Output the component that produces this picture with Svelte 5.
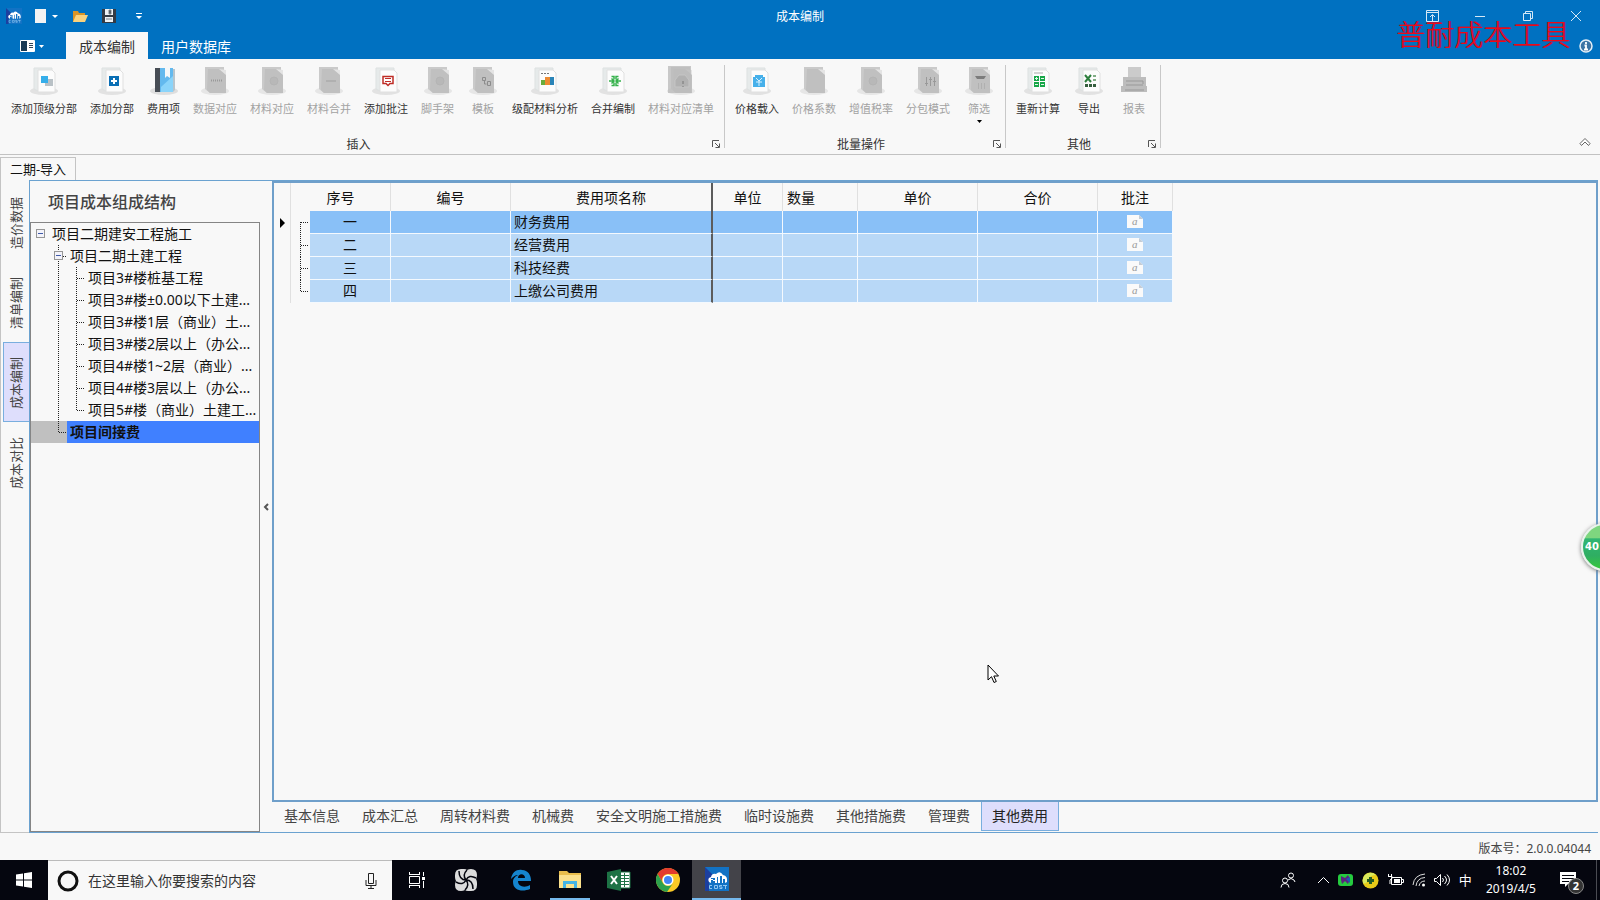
<script>
    let activeRibbonTab = $state('成本编制');
    let activeSideTab = $state('成本编制');
    let activeSheet = $state('其他费用');
    let selectedNode = $state(9);
    let selectedRow = $state(0);

    const ribbonTabs = ['成本编制', '用户数据库'];

    const groups = [
        {
            title: '插入',
            items: [
                { label: '添加顶级分部', icon: 'top' },
                { label: '添加分部', icon: 'add' },
                { label: '费用项', icon: 'book' },
                { label: '数据对应', icon: 'data', disabled: true },
                { label: '材料对应', icon: 'match', disabled: true },
                { label: '材料合并', icon: 'merge', disabled: true },
                { label: '添加批注', icon: 'comment' },
                { label: '脚手架', icon: 'match', disabled: true },
                { label: '模板', icon: 'template', disabled: true },
                { label: '级配材料分析', icon: 'chart' },
                { label: '合并编制', icon: 'combine' },
                { label: '材料对应清单', icon: 'list', disabled: true }
            ]
        },
        {
            title: '批量操作',
            items: [
                { label: '价格载入', icon: 'price' },
                { label: '价格系数', icon: 'plain', disabled: true },
                { label: '增值税率', icon: 'match', disabled: true },
                { label: '分包模式', icon: 'sliders', disabled: true },
                { label: '筛选', icon: 'filter', disabled: true, menu: true }
            ]
        },
        {
            title: '其他',
            items: [
                { label: '重新计算', icon: 'calc' },
                { label: '导出', icon: 'export' },
                { label: '报表', icon: 'print', disabled: true }
            ]
        }
    ];

    const sideTabs = ['造价数据', '清单编制', '成本编制', '成本对比'];

    // guides: one entry per 18px indent cell in front of the text
    const tree = [
        { text: '项目二期建安工程施工', guides: ['root'] },
        { text: '项目二期土建工程', guides: ['blank', 'box'] },
        { text: '项目3#楼桩基工程', guides: ['blank', 'line', 'tee'] },
        { text: '项目3#楼±0.00以下土建...', guides: ['blank', 'line', 'tee'] },
        { text: '项目3#楼1层（商业）土...', guides: ['blank', 'line', 'tee'] },
        { text: '项目3#楼2层以上（办公...', guides: ['blank', 'line', 'tee'] },
        { text: '项目4#楼1~2层（商业）...', guides: ['blank', 'line', 'tee'] },
        { text: '项目4#楼3层以上（办公...', guides: ['blank', 'line', 'tee'] },
        { text: '项目5#楼（商业）土建工...', guides: ['blank', 'line', 'end'] },
        { text: '项目间接费', guides: ['blank', 'end'] }
    ];

    const rows = [
        { no: '一', name: '财务费用' },
        { no: '二', name: '经营费用' },
        { no: '三', name: '科技经费' },
        { no: '四', name: '上缴公司费用' }
    ];

    const sheets = ['基本信息', '成本汇总', '周转材料费', '机械费', '安全文明施工措施费', '临时设施费', '其他措施费', '管理费', '其他费用'];
</script>

{#snippet page(grey)}
    <ellipse cx="16" cy="26" rx="14" ry="4" fill={grey ? '#e6e6e6' : '#e2e2e2'} />
    {#if grey}
        <path d="M6 2H25V6L27 8V28H11L6 24Z" fill="#cacaca" />
        <path d="M9 4H22L27 9V28H11L8 25Z" fill="#c0c0c0" />
        <path d="M20 4L27 10V5Z" fill="#e4e4e4" />
    {:else}
        <path d="M6 3H24V26H10L6 24Z" fill="#e6eaea" stroke="#dde1e1" />
        <path d="M10 5H24L27 8V27H10Z" fill="#fcfcfc" stroke="#e0e0e0" />
    {/if}
{/snippet}

{#snippet cloud()}
    <path d="M0 0H24V24H0Z" fill="#1272c4" />
    <path d="M0 0L8 8L4 16V24H0Z" fill="#1c3f9f" />
    <path d="M4 15Q2 11 6 10Q7 6 11 7Q15 3 18 8Q23 9 22 15L20 16V12H18V16H17V9H15V16H13V10H12V16H10V14H8V13H10V11H6V12H8V13H6V16Z" fill="#fff" />
    <path d="M7 18.500H4.500V21.500H7M9.500 18.500h3v3h-3zM17 18.500h-2.500v1.500h2.500v1.500h-2.500M18 18.500h4M20.500 18v4" fill="none" stroke="#8fc5f0" />
{/snippet}

{#snippet ribbonIcon(icon, disabled)}
    <svg width="32" height="32" viewBox="0 0 32 32" aria-hidden="true">
        {#if icon === 'book'}
            <ellipse cx="16" cy="26" rx="14" ry="4" fill="#dedede" />
            <path d="M7 3H25V27H7Z" fill="#63b9ee" />
            <path d="M7 3H12V27H7Z" fill="#474d55" />
            <path d="M13 22L25 11V27H13Z" fill="#8ad4fa" />
            <path d="M17 3H22V13L19 11L17 13Z" fill="#f4f8fa" />
            <path d="M25 4H27V25L25 27Z" fill="#b7c5cd" />
        {:else if icon === 'print'}
            <path d="M10 2H23V13H10Z" fill="#cbcbcb" />
            <path d="M5 12H28V21H29V27H3V21H5Z" fill="#bdbdbd" />
            <path d="M8 16H25V19M8 20H25M7 25H26" fill="none" stroke="#999" />
        {:else}
            {@render page(disabled)}
            {#if icon === 'top'}
                <path d="M17 14h8v7h-8z" fill="#b9c1c6" />
                <path d="M13 11h7v7h-7z" fill="#36aeea" />
            {:else if icon === 'add'}
                <path d="M13 11h10v10h-10z" fill="#0a6fb5" />
                <path d="M18 13v6M15 16h6" stroke="#fff" stroke-width="2" />
            {:else if icon === 'comment'}
                <path d="M13 11.500h10v7h-3l-2 2l-2-2h-3z" fill="#fff" stroke="#bf2c26" stroke-width="1.500" />
                <path d="M15 13.500h6M15 16.500h6" stroke="#bf2c26" />
            {:else if icon === 'chart'}
                <path d="M12 8.500h9" stroke="#777" stroke-dasharray="2 1" />
                <path d="M12 15h4v5h-4z" fill="#69ad3b" />
                <path d="M16 12h5v8h-5z" fill="#ed8b32" />
                <path d="M21 12h4v8h-4z" fill="#2a84b8" />
            {:else if icon === 'combine'}
                <path d="M14.500 11.500h2.500v3M14.500 20.500h2.500v-3M21.500 11.500h-2.500v3M21.500 20.500h-2.500v-3M12 16h5M24 16h-5M14.500 13.500l2.500 2.500l-2.500 2.500M21.500 13.500l-2.500 2.500l2.500 2.500" fill="none" stroke="#34b14b" stroke-width="1.500" />
            {:else if icon === 'price'}
                <path d="M14 10h8v2h2v10h-12v-10h2z" fill="#47b0ea" />
                <path d="M15 13l3 3l3-3M18 16v5M15 17h6" fill="none" stroke="#d9f1ff" />
            {:else if icon === 'calc'}
                <path d="M12 8h9" stroke="#aaa" />
                <path d="M12 11h5v5h-5zM18 11h5v5h-5zM12 17h5v5h-5zM18 17h5v5h-5z" fill="#17a648" />
                <path d="M13 13.500h3M19 13.500h3M13 19.500h3M19 19.500h3M14.500 12v3" stroke="#e3f7e9" />
            {:else if icon === 'export'}
                <path d="M12 10l6 7M18 10l-6 7" stroke="#2d7e3d" stroke-width="2" />
                <path d="M20 10h3v2h-3zM20 14h3v2h-3z" fill="#80ac84" />
                <path d="M12 19h3v3h-3zM16 19h3v3h-3zM20 19h3v3h-3z" fill="#355e3e" />
            {:else if icon === 'data'}
                <path d="M12 15.500h12" stroke="#999" stroke-width="2" stroke-dasharray="1 1" />
            {:else if icon === 'match'}
                <circle cx="18" cy="16" r="4" fill="#b8b8b8" stroke="#b4b4b4" />
            {:else if icon === 'merge'}
                <path d="M13 16h10" stroke="#b0b0b0" stroke-width="2" />
            {:else if icon === 'template'}
                <path d="M15.500 12.500h3v3h-3zM17.500 16v3h2M20.500 16.500h3v4h-3z" fill="none" stroke="#8c8c8c" />
            {:else if icon === 'list'}
                <path d="M3 1h23v27h-23z" fill="#bbb" opacity=".8" />
                <path d="M10 22v-7l4-5h6l4 5v7z" fill="#b1b1b1" stroke="#c4c4c4" />
                <path d="M18 16v3M18 21v1" stroke="#777" />
            {:else if icon === 'sliders'}
                <path d="M14.500 12v9M18.500 12v9M22.500 12v9M13 18.500h3M17 14.500h3M21 16.500h3" stroke="#999" />
            {:else if icon === 'filter'}
                <path d="M12 11h11l-2 3h-7z" fill="#7c7c7c" />
                <path d="M15.500 18v6M18.500 18v6M21.500 18v6" stroke="#b0b0b0" />
            {/if}
        {/if}
    </svg>
{/snippet}

{#snippet guide(kind)}
    <svg class="guide" width="18" height="22" viewBox="0 0 18 22" aria-hidden="true">
        <g stroke="#222" stroke-dasharray="1 1">
            {#if kind === 'line' || kind === 'tee' || kind === 'box'}
                <path d="M9.5 0V22" />
            {/if}
            {#if kind === 'end'}
                <path d="M9.5 0V11" />
            {/if}
            {#if kind === 'tee' || kind === 'end' || kind === 'box'}
                <path d="M10 11.5H18" />
            {/if}
        </g>
        {#if kind === 'root' || kind === 'box'}
            <rect x="5.5" y="6.5" width="8" height="8" fill="#f3f3fa" stroke="#969696" />
            <path d="M7 10.5H12" stroke="#3f5aa8" />
        {/if}
    </svg>
{/snippet}

<div class="window">
    <header>
        <div class="titlebar">
            <div class="quick">
                <svg class="logo" width="16" height="16" viewBox="0 0 24 24" aria-hidden="true">{@render cloud()}</svg>
                <button aria-label="新建">
                    <svg width="24" height="16" viewBox="0 0 24 16"><path d="M0 1h11v14h-11z" fill="#f3f3f3" /><path d="M17 7h6l-3 3z" fill="#fff" /></svg>
                </button>
                <button aria-label="打开">
                    <svg width="16" height="16" viewBox="0 0 16 16"><path d="M1 3h5l1 2h6v9h-12z" fill="#d99427" /><path d="M4 7h12l-3 7h-12z" fill="#f9d27e" /></svg>
                </button>
                <button aria-label="保存">
                    <svg width="16" height="16" viewBox="0 0 16 16"><path d="M1 1h14v14h-14z" fill="#333b45" /><path d="M4 1h8v6h-8zM4 9h8v5h-8z" fill="#eef2f5" /><path d="M8 2h2v4h-2zM5 11h6" fill="#333b45" stroke="#7d858c" stroke-width="1" /></svg>
                </button>
                <button aria-label="自定义快速访问工具栏">
                    <svg width="8" height="16" viewBox="0 0 8 16"><path d="M1 5.5h6" stroke="#fff" /><path d="M1 8h6l-3 3z" fill="#fff" /></svg>
                </button>
            </div>
            <h1>成本编制</h1>
            <div class="controls">
                <button aria-label="功能区显示选项">
                    <svg width="13" height="12" viewBox="0 0 13 12"><path d="M.5.5h12v11h-12zM.5 2.5h12M6.500 11V5M4 7l2.500-2.500l2.500 2.500" fill="none" stroke="#d5e8f6" /></svg>
                </button>
                <button aria-label="最小化">
                    <svg width="12" height="12" viewBox="0 0 12 12"><path d="M1 6.500h10" stroke="#d5e8f6" /></svg>
                </button>
                <button aria-label="还原">
                    <svg width="12" height="12" viewBox="0 0 12 12"><path d="M1.500 3.500h7v7h-7zM3.500 3.500v-2h7v7h-2" fill="none" stroke="#d5e8f6" /></svg>
                </button>
                <button aria-label="关闭">
                    <svg width="12" height="12" viewBox="0 0 12 12"><path d="M1 1l10 10M11 1l-10 10" stroke="#d5e8f6" /></svg>
                </button>
            </div>
            <div class="brand">普耐成本工具</div>
        </div>
        <nav class="ribbon-tabs">
            <button class="app-menu" aria-label="文件">
                <svg width="26" height="12" viewBox="0 0 26 12"><path d="M.5.5h14v11h-14z" fill="#183a55" stroke="#fff" /><path d="M7 1h7v10h-7z" fill="#fff" /><path d="M9 3.500h4M9 5.500h4M9 7.500h4" stroke="#345" /><path d="M19 5h5l-2.500 3z" fill="#fff" /></svg>
            </button>
            {#each ribbonTabs as tab}
                <button class="ribbon-tab" class:active={activeRibbonTab === tab} onclick={() => (activeRibbonTab = tab)}>{tab}</button>
            {/each}
            <button class="info" aria-label="关于">
                <svg width="14" height="14" viewBox="0 0 14 14"><circle cx="7" cy="7" r="6" fill="#3c73a4" stroke="#e6eff7" stroke-width="1.500" /><path d="M7 3v2M5.500 6.500h1.500v4M5 10.500h4" fill="none" stroke="#fff" stroke-width="1.800" /></svg>
            </button>
        </nav>
    </header>

    <section class="ribbon">
        {#each groups as group}
            <div class="group">
                <div class="tools">
                    {#each group.items as item}
                        <button class="tool" disabled={item.disabled}>
                            {@render ribbonIcon(item.icon, item.disabled)}
                            <span>{item.label}</span>
                            {#if item.menu}
                                <svg width="5" height="3" viewBox="0 0 5 3" aria-hidden="true"><path d="M0 0h5l-2.500 3z" fill="#000" /></svg>
                            {/if}
                        </button>
                    {/each}
                </div>
                <div class="caption">
                    <span>{group.title}</span>
                    <button aria-label="{group.title}选项">
                        <svg width="8" height="8" viewBox="0 0 8 8"><path d="M.5 7V.5H7M3 3l4 4M7.500 3.500v4h-4" fill="none" stroke="#555" /></svg>
                    </button>
                </div>
            </div>
        {/each}
        <button class="fold" aria-label="折叠功能区">
            <svg width="12" height="9" viewBox="0 0 12 9"><path d="M1 5.500l5-5l5 5l-1.500 2l-3.500-3.500l-3.500 3.500z" fill="#fff" stroke="#666" /></svg>
        </button>
    </section>

    <div class="doc-tabs">
        <button>二期-导入</button>
    </div>

    <main>
        <nav class="side-tabs">
            {#each sideTabs as tab}
                <button class:active={activeSideTab === tab} onclick={() => (activeSideTab = tab)}><span>{tab}</span></button>
            {/each}
        </nav>

        <div class="frame">
            <aside>
                <h2>项目成本组成结构</h2>
                <ul class="tree">
                    {#each tree as node, i}
                        <li>
                            <button class="node" class:selected={selectedNode === i} onclick={() => (selectedNode = i)}>
                                {#each node.guides as kind}{@render guide(kind)}{/each}
                                <span>{node.text}</span>
                            </button>
                        </li>
                    {/each}
                </ul>
            </aside>
            <button class="splitter" aria-label="收起">
                <svg width="6" height="8" viewBox="0 0 6 8"><path d="M5 1L2 4L5 7" fill="none" stroke="#555" stroke-width="2" /></svg>
            </button>

            <div class="content">
                <div class="sheet">
                    <table>
                        <colgroup>
                            <col class="w-mark" /><col class="w-guide" /><col class="w-no" /><col class="w-wide" /><col class="w-name" />
                            <col class="w-unit" /><col class="w-short" /><col class="w-wide" /><col class="w-wide" /><col class="w-short" />
                        </colgroup>
                        <thead>
                            <tr>
                                <th></th>
                                <th colspan="2">序号</th>
                                <th>编号</th>
                                <th class="fixed">费用项名称</th>
                                <th>单位</th>
                                <th class="left">数量</th>
                                <th>单价</th>
                                <th>合价</th>
                                <th>批注</th>
                            </tr>
                        </thead>
                        <tbody>
                            {#each rows as row, i}
                                <tr class:selected={selectedRow === i} onclick={() => (selectedRow = i)}>
                                    <td class="mark">
                                        {#if selectedRow === i}
                                            <svg width="5" height="10" viewBox="0 0 5 10"><path d="M0 0l5 5l-5 5z" fill="#000" /></svg>
                                        {/if}
                                    </td>
                                    <td class="lines">
                                        <svg width="19" height="23" viewBox="0 0 19 23">
                                            <g stroke="#222" stroke-dasharray="1 1">
                                                <path d="M9.500 {i === 0 ? 11 : 0}V{i === rows.length - 1 ? 11 : 23}" />
                                                <path d="M10 11.500H18" />
                                            </g>
                                        </svg>
                                    </td>
                                    <td class="center">{row.no}</td>
                                    <td></td>
                                    <td class="fixed">{row.name}</td>
                                    <td></td>
                                    <td></td>
                                    <td></td>
                                    <td></td>
                                    <td class="center">
                                        <button class="note" aria-label="批注">
                                            <svg width="16" height="13" viewBox="0 0 16 13"><path d="M0 0h12l4 4v9h-16z" fill="#fafafa" /><path d="M12 0v4h4z" fill="#c3ccd6" /><text x="5" y="10">a</text></svg>
                                        </button>
                                    </td>
                                </tr>
                            {/each}
                        </tbody>
                    </table>
                </div>
                <nav class="sheet-tabs">
                    {#each sheets as sheet}
                        <button class:active={activeSheet === sheet} onclick={() => (activeSheet = sheet)}>{sheet}</button>
                    {/each}
                </nav>
            </div>
        </div>
    </main>

    <footer class="status">版本号：2.0.0.04044</footer>

    <div class="taskbar">
        <button class="start" aria-label="开始">
            <svg width="16" height="16" viewBox="0 0 16 16"><path d="M0 2.500L7 1.500V7.500H0zM8 1.300L16 0V7.500H8zM0 8.500H7V14.500L0 13.500zM8 8.500H16V16L8 14.700z" fill="#fff" /></svg>
        </button>
        <label class="search">
            <svg width="22" height="22" viewBox="0 0 22 22" aria-hidden="true"><circle cx="11" cy="11" r="9" fill="none" stroke="#111" stroke-width="3" /></svg>
            <input type="text" placeholder="在这里输入你要搜索的内容" aria-label="搜索" />
            <svg width="12" height="18" viewBox="0 0 12 18" aria-hidden="true"><path d="M3.500 1.500h5v10h-5zM1 8v5.500h10V8M6 14v3M3 16.500h6" fill="none" stroke="#222" /></svg>
        </label>
        <button class="task" aria-label="任务视图">
            <svg width="18" height="16" viewBox="0 0 18 16"><path d="M1.500 0v3M11.500 0v3M1.500 13v3M11.500 13v3M1 2.500h11M1 13.500h11M1.500 4.500h10v7h-10zM15.500 0v4M15.500 9v7" fill="none" stroke="#fff" /><path d="M14 5h3v3h-3z" fill="#fff" /></svg>
        </button>
        <button class="task fan" aria-label="风扇">
            <svg width="22" height="22" viewBox="0 0 22 22">
                <path d="M6 0H9Q11 0 12 1Q14 0 16 0Q22 0 22 6Q22 8 21 10Q22 12 22 14V16Q22 22 16 22H13Q11 22 10 21Q8 22 6 22Q0 22 0 16Q0 14 1 12Q0 10 0 8V6Q0 0 6 0Z" fill="#dcdcdc" />
                <path d="M11 11Q7 6 12 1M11 11Q14 5 21 9M11 11Q18 11 18 20M11 11Q15 16 10 21M11 11Q8 17 1 13M11 11Q4 11 4 2" fill="none" stroke="#05060f" stroke-width="1.500" />
            </svg>
        </button>
        <button class="task" aria-label="Edge">
            <svg width="22" height="22" viewBox="0 0 22 22"><path d="M1 10C2 3 7 0 12 1C18 1 21 6 21 12H8C8 18 15 19 20 16V20C13 23 3 22 3 13C3 9 6 7 8 6C5 6 3 8 1 10ZM8 9H15C15 4 8 4 8 9Z" fill="#1585cf" /></svg>
        </button>
        <button class="task open" aria-label="文件资源管理器">
            <svg width="22" height="20" viewBox="0 0 22 20"><path d="M0 1h8l2 2h12v15h-22z" fill="#e9bd4c" /><path d="M0 5h22v13h-22z" fill="#fbe08c" /><path d="M4 18v-7h14v7h-3v-4h-8v4z" fill="#45b3e4" /></svg>
        </button>
        <button class="task" aria-label="Excel">
            <svg width="24" height="22" viewBox="0 0 24 22"><path d="M12 3h11v16h-11z" fill="#fff" stroke="#1d7245" /><path d="M13 6.500h9M13 9.500h9M13 12.500h9M13 15.500h9M17.500 4v14" stroke="#1d7245" /><path d="M0 3L14 0V22L0 19z" fill="#1d7245" /><path d="M4 7l6 8M10 7l-6 8" stroke="#fff" stroke-width="2" /></svg>
        </button>
        <button class="task" aria-label="Chrome">
            <svg width="24" height="24" viewBox="0 0 24 24"><circle cx="12" cy="12" r="12" fill="#fbc926" /><path d="M1.600 6A12 12 0 0 1 22.400 6H12A6 6 0 0 0 6.800 15Z" fill="#e33b2e" /><path d="M1.600 6A12 12 0 0 0 11 24L17.200 15A6 6 0 0 1 6.800 15Z" fill="#2da14d" /><circle cx="12" cy="12" r="5.500" fill="#fff" /><circle cx="12" cy="12" r="4" fill="#4285f4" /></svg>
        </button>
        <button class="task current" aria-label="成本编制">
            <svg width="24" height="24" viewBox="0 0 24 24">{@render cloud()}</svg>
        </button>

        <div class="tray">
            <button class="people" aria-label="人脉">
                <svg width="16" height="16" viewBox="0 0 16 16"><circle cx="11" cy="3.500" r="2.500" fill="none" stroke="#fff" /><circle cx="5" cy="8.500" r="2.500" fill="none" stroke="#fff" /><path d="M1 15.500q0-4 4-4t4 4M8 8q3-3 6 0l1 2" fill="none" stroke="#fff" /></svg>
            </button>
            <button aria-label="显示隐藏的图标">
                <svg width="13" height="8" viewBox="0 0 13 8"><path d="M1 7l5.500-5.500l5.500 5.500" fill="none" stroke="#fff" /></svg>
            </button>
            <button aria-label="电池助手">
                <svg width="16" height="14" viewBox="0 0 16 14"><rect x="0" y="1" width="15" height="12" rx="3" fill="#25cb3f" /><path d="M3 3l4 2l3-3l2 4l-2 5l-3-3l-3 3l-1-4z" fill="#5b2480" /><path d="M8 6l4-2v6z" fill="#1d59b5" /></svg>
            </button>
            <button aria-label="安全卫士">
                <svg width="17" height="17" viewBox="0 0 17 17"><circle cx="8.500" cy="8.500" r="8" fill="#e8cb18" /><path d="M2 4a8 8 0 0 1 12-1q-6 0-8 5t-5 3q-1-3 1-7" fill="#d9ea5c" /><path d="M8.500 5v7M5 8.500h7" stroke="#245c20" stroke-width="3" /></svg>
            </button>
            <button aria-label="电源">
                <svg width="17" height="12" viewBox="0 0 17 12"><path d="M4.500 3.500h10v7h-10zM15 5.500h1.500v3H15M1.500 0v2M4.500 0v2M1 2.500h4v2l-2 1.500v4" fill="none" stroke="#fff" /><path d="M7 5h6v4h-6z" fill="#fff" /></svg>
            </button>
            <button aria-label="网络">
                <svg width="14" height="14" viewBox="0 0 14 14"><path d="M1 12Q2 2 13 1M4 13Q5 5 13 4.500M7 13Q8 8 13 8" fill="none" stroke="#ddd" /><circle cx="11.500" cy="12" r="1.500" fill="#fff" /></svg>
            </button>
            <button aria-label="音量">
                <svg width="17" height="14" viewBox="0 0 17 14"><path d="M.5 5.500h2l4-4v11l-4-4h-2zM8.500 5q2 2 0 4M10.500 3q4 4 0 8M13 1.500q5 5.500 0 11" fill="none" stroke="#fff" /></svg>
            </button>
            <button class="ime">中</button>
            <button class="clock"><span>18:02</span><span>2019/4/5</span></button>
            <button class="notice" aria-label="通知">
                <svg width="16" height="16" viewBox="0 0 16 16"><path d="M0 0h16v12h-8l-3 3v-3h-5z" fill="#fff" /><path d="M2 3.500h12M2 6.500h12M2 9.500h7" stroke="#05060f" /></svg>
                <span>2</span>
            </button>
        </div>
    </div>

    <div class="ball">40</div>
    <svg class="pointer" width="13" height="20" viewBox="0 0 13 20" aria-hidden="true"><path d="M1 1V16L4.500 12.700L7 18.500L9.300 17.500L6.800 12H11.500Z" fill="#fff" stroke="#000" /></svg>
</div>

<style>
    :global(body) {
        margin: 0;
        overflow: hidden;
    }

    .window {
        position: relative;
        display: flex;
        flex-direction: column;
        min-height: 100vh;
        overflow: hidden;
        background: #f8f8f8;
        color: #111;
        font-family: "Noto Sans", "Noto Sans CJK SC", sans-serif;
        font-size: 14px;
        line-height: 20px;
    }

    button {
        padding: 0;
        border: 0;
        background: none;
        color: inherit;
        font: inherit;
        white-space: nowrap;
    }

    svg {
        display: block;
        flex: none;
    }

    header {
        background: #0071c1;
        color: #fff;
    }

    .titlebar {
        position: relative;
        display: grid;
        grid-template-columns: 1fr auto 1fr;
        align-items: center;
        height: 32px;
    }

    .quick {
        display: flex;
        align-items: center;
        gap: 13px;
        padding-left: 6px;
    }

    .quick button:last-child {
        margin-left: 5px;
    }

    h1 {
        margin: 0;
        padding-top: 2px;
        font-size: 12px;
        font-weight: 400;
    }

    .controls {
        display: flex;
        justify-content: flex-end;
    }

    .controls button {
        display: grid;
        place-items: center;
        width: 48px;
        height: 32px;
    }

    .brand {
        position: absolute;
        right: 30px;
        top: 18px;
        color: #f00a14;
        font-family: "Liberation Serif", "Noto Sans CJK SC", serif;
        font-size: 29px;
        font-weight: 300;
        line-height: 36px;
        text-shadow: 1px 0 #60105a;
    }

    .ribbon-tabs {
        display: flex;
        height: 27px;
    }

    .app-menu {
        display: grid;
        place-items: center;
        width: 66px;
    }

    .ribbon-tab {
        padding: 2px 13px 0;
    }

    .ribbon-tab.active {
        background: #f8f8f8;
        color: #333;
    }

    .info {
        margin-left: auto;
        padding-right: 7px;
    }

    .ribbon {
        display: flex;
        height: 95px;
        border-bottom: 1px solid #c2c2c2;
    }

    .group {
        display: flex;
        flex-direction: column;
        justify-content: space-between;
        margin: 6px 0;
        padding: 0 4px;
        border-right: 1px solid #c8c8c8;
    }

    .group:first-child {
        padding-left: 5px;
    }

    .tools {
        display: flex;
        align-items: flex-start;
        gap: 1px;
        height: 60px;
    }

    .tool {
        display: flex;
        flex-direction: column;
        align-items: center;
        min-width: 44px;
        padding: 0 6px;
        color: #333;
        font-size: 11px;
        line-height: 18px;
    }

    .tool span {
        margin-top: 3px;
    }

    .tool:disabled {
        color: #a2a2a2;
    }

    .tool svg + span + svg {
        margin-top: 2px;
    }

    .caption {
        display: flex;
        align-items: center;
        height: 12px;
        color: #333;
        font-size: 12px;
        line-height: 14px;
    }

    .caption span {
        flex: 1;
        padding-top: 6px;
        text-align: center;
    }

    .caption button {
        padding-top: 4px;
    }

    .fold {
        align-self: flex-end;
        margin: 0 9px 7px auto;
    }

    .doc-tabs {
        height: 23px;
        padding-top: 2px;
    }

    .doc-tabs button {
        width: 76px;
        height: 23px;
        border: 1px solid #c4c4c4;
        border-bottom: 0;
        font-size: 13px;
        line-height: 18px;
    }

    main {
        display: flex;
        flex: 1;
    }

    .side-tabs {
        display: flex;
        flex-direction: column;
        width: 29px;
        padding-top: 2px;
        box-sizing: border-box;
        border-left: 1px solid #c4c4c4;
        border-bottom: 1px solid #c4c4c4;
    }

    .side-tabs button {
        display: flex;
        align-items: center;
        justify-content: center;
        height: 80px;
        margin-left: 2px;
        padding: 2px 2px 0 0;
        border: 1px solid transparent;
        border-right: 0;
        color: #444;
        font-size: 13px;
    }

    .side-tabs button.active {
        border-color: #79aede;
        background: #dedefc;
    }

    .side-tabs span {
        writing-mode: vertical-rl;
        text-orientation: sideways;
        transform: rotate(180deg);
    }

    .frame {
        display: flex;
        flex: 1;
        min-width: 0;
        margin-right: 2px;
        border: 1px solid #6ba2d0;
        border-right: 0;
    }

    aside {
        display: flex;
        flex-direction: column;
        width: 230px;
    }

    h2 {
        margin: 0;
        padding: 1px 0 0 18px;
        color: #444;
        font-size: 16px;
        font-weight: 500;
        line-height: 40px;
    }

    .tree {
        flex: 1;
        margin: 0;
        padding: 0;
        border: 1px solid #858585;
        list-style: none;
    }

    .node {
        display: flex;
        width: 100%;
        height: 22px;
        text-align: left;
        line-height: 22px;
    }

    .node span {
        flex: 1;
        padding-left: 3px;
        overflow: hidden;
    }

    .node.selected {
        background: #c0c0c0;
        font-weight: 700;
    }

    .node.selected span {
        background: #4080ff;
    }

    .splitter {
        display: grid;
        place-items: center;
        width: 12px;
    }

    .content {
        display: flex;
        flex: 1;
        flex-direction: column;
        min-width: 0;
    }

    .sheet {
        flex: 1;
        border: 2px solid #6f9fca;
    }

    table {
        table-layout: fixed;
        width: 899px;
        border-collapse: separate;
        border-spacing: 0;
    }

    .w-mark { width: 17px; }
    .w-guide { width: 19px; }
    .w-no { width: 81px; }
    .w-wide { width: 120px; }
    .w-name { width: 202px; }
    .w-unit { width: 70px; }
    .w-short { width: 75px; }

    th,
    td {
        box-sizing: border-box;
        padding: 0;
        border-right: 1px solid #e0e0e0;
        font-weight: 400;
    }

    th {
        height: 28px;
        padding-top: 2px;
    }

    th.left {
        padding-left: 4px;
        text-align: left;
    }

    td {
        height: 23px;
        border-right-color: #f4f9fe;
        border-bottom: 1px solid #f4f9fe;
        background: #b8d8f7;
        line-height: 22px;
    }

    .selected td {
        background: #89c0f7;
    }

    td.mark,
    td.lines {
        border-bottom: 0;
        background: none;
    }

    td.mark {
        border-right-color: #e0e0e0;
    }

    td.lines {
        border-right: 0;
    }

    .mark svg {
        margin-left: 6px;
    }

    td.center {
        text-align: center;
    }

    th.fixed,
    td.fixed {
        border-right: 2px solid #5c5c5c;
    }

    td.fixed {
        padding-left: 3px;
    }

    .note {
        display: block;
        margin: 0 auto;
        padding-bottom: 2px;
    }

    .note text {
        fill: #999;
        font: italic 11px "Liberation Serif", serif;
    }

    .sheet-tabs {
        display: flex;
        height: 30px;
        padding-left: 1px;
        color: #444;
    }

    .sheet-tabs button {
        height: 29px;
        padding: 0 10px;
        border: 1px solid transparent;
        border-top: 0;
    }

    .sheet-tabs button.active {
        border-color: #79aede;
        background: #dedefc;
        color: #222;
    }

    .status {
        height: 27px;
        padding-right: 9px;
        color: #444;
        font-size: 12px;
        line-height: 31px;
        text-align: right;
    }

    .taskbar {
        display: flex;
        height: 40px;
        background: #05060f;
        color: #fff;
    }

    .start,
    .task {
        display: grid;
        place-items: center;
        width: 49px;
    }

    .start {
        width: 48px;
    }

    .search {
        display: flex;
        align-items: center;
        width: 344px;
        box-sizing: border-box;
        padding: 0 15px 0 9px;
        border-top: 1px solid #bbb;
        background: #f8f8f8;
    }

    .search input {
        flex: 1;
        min-width: 0;
        padding: 0 9px;
        border: 0;
        outline: 0;
        background: none;
        font: inherit;
    }

    .search input::placeholder {
        color: #333;
        opacity: 1;
    }

    .fan {
        margin-right: 6px;
    }

    .open {
        background: linear-gradient(#76b9ed, #76b9ed) bottom / 40px 2px no-repeat;
    }

    .current {
        border-bottom: 2px solid #76b9ed;
        background: #434349;
    }

    .tray {
        display: flex;
        align-items: center;
        gap: 8px;
        margin-left: auto;
        padding-right: 4px;
        border-right: 1px solid #4a4b52;
        margin-right: 3px;
    }

    .people {
        margin-right: 13px;
    }

    .ime {
        font-size: 13px;
    }

    .clock {
        display: flex;
        flex-direction: column;
        align-items: center;
        padding: 0 16px 0 6px;
        font-size: 12px;
        line-height: 18px;
    }

    .notice {
        position: relative;
        padding: 0 16px 0 0;
    }

    .notice span {
        position: absolute;
        left: 8px;
        top: 6px;
        width: 14px;
        height: 14px;
        border: 1px solid #888;
        border-radius: 50%;
        background: #333;
        font-size: 11px;
        font-weight: 700;
        line-height: 14px;
    }

    .ball {
        position: absolute;
        right: -29px;
        top: 523px;
        width: 48px;
        height: 48px;
        box-sizing: border-box;
        padding-left: 2px;
        border: 2px solid #e9f3ec;
        border-radius: 50%;
        background: linear-gradient(#7ed67f 30%, #30b573 31%, #2fae62 70%, #35c93b);
        box-shadow: 0 1px 4px #777;
        color: #fff;
        font: 700 10px/44px "DejaVu Sans", sans-serif;
    }

    .pointer {
        position: absolute;
        left: 987px;
        top: 664px;
    }
</style>
